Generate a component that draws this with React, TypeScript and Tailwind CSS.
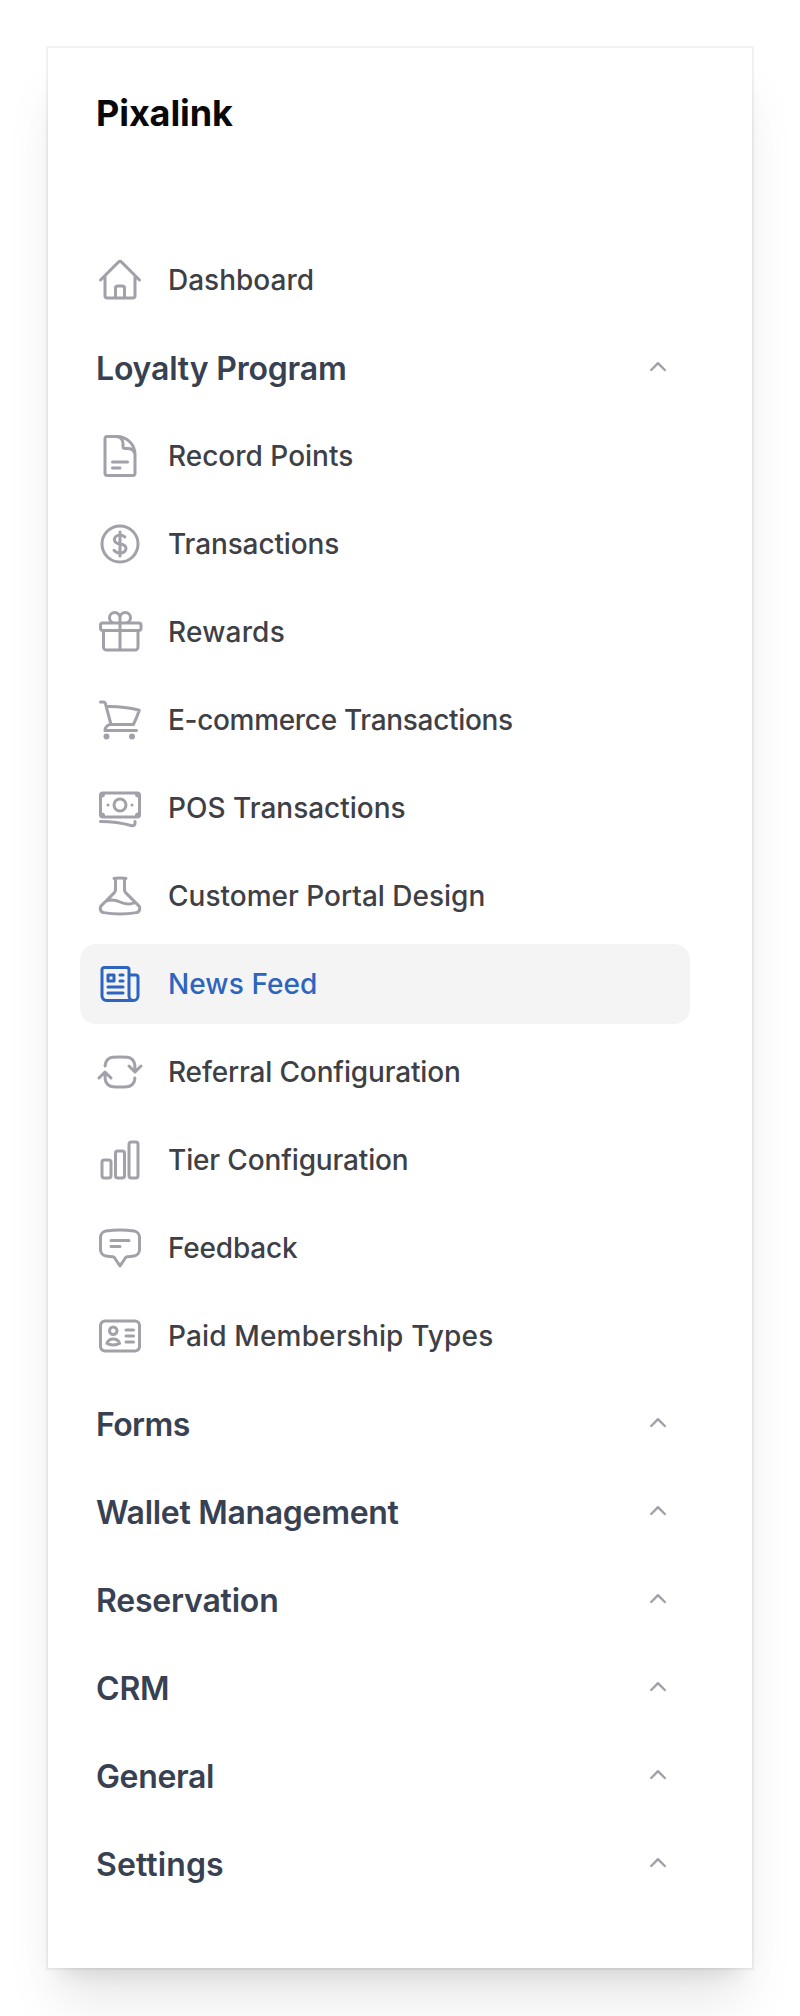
import type { ComponentType } from 'react';
import {
  HiMiniChevronUp,
  HiOutlineArrowPathRoundedSquare,
  HiOutlineBanknotes,
  HiOutlineBeaker,
  HiOutlineChartBar,
  HiOutlineChatBubbleBottomCenterText,
  HiOutlineCurrencyDollar,
  HiOutlineDocumentText,
  HiOutlineGift,
  HiOutlineHome,
  HiOutlineIdentification,
  HiOutlineNewspaper,
  HiOutlineShoppingCart,
} from 'react-icons/hi2';

interface NavItem {
  label: string;
  icon: ComponentType<{ className?: string }>;
  tracking?: string;
  active?: boolean;
}

interface NavGroup {
  label: string;
  tracking?: string;
  items?: NavItem[];
}

const GROUPS: NavGroup[] = [
  {
    label: 'Loyalty Program',
    tracking: 'tracking-[-0.18px]',
    items: [
      { label: 'Record Points', icon: HiOutlineDocumentText },
      { label: 'Transactions', icon: HiOutlineCurrencyDollar, tracking: 'tracking-[-0.12px]' },
      { label: 'Rewards', icon: HiOutlineGift, tracking: 'tracking-[0.2px]' },
      { label: 'E-commerce Transactions', icon: HiOutlineShoppingCart, tracking: 'tracking-[-0.32px]' },
      { label: 'POS Transactions', icon: HiOutlineBanknotes },
      { label: 'Customer Portal Design', icon: HiOutlineBeaker },
      { label: 'News Feed', icon: HiOutlineNewspaper, tracking: 'tracking-[0.1px]', active: true },
      { label: 'Referral Configuration', icon: HiOutlineArrowPathRoundedSquare, tracking: 'tracking-[-0.15px]' },
      { label: 'Tier Configuration', icon: HiOutlineChartBar, tracking: 'tracking-[-0.15px]' },
      { label: 'Feedback', icon: HiOutlineChatBubbleBottomCenterText, tracking: 'tracking-[-0.2px]' },
      { label: 'Paid Membership Types', icon: HiOutlineIdentification, tracking: 'tracking-[0.15px]' },
    ],
  },
  { label: 'Forms', tracking: 'tracking-[-0.6px]' },
  { label: 'Wallet Management', tracking: 'tracking-[-0.3px]' },
  { label: 'Reservation', tracking: 'tracking-[-0.2px]' },
  { label: 'CRM', tracking: 'tracking-[-0.2px]' },
  { label: 'General', tracking: 'tracking-[-0.35px]' },
  { label: 'Settings', tracking: 'tracking-[0.1px]' },
];

function SidebarItem({ label, icon: Icon, tracking = '', active = false }: NavItem) {
  return (
    <li>
      <a
        href="#"
        className={`flex h-20 items-center gap-6 rounded-2xl px-4 ${active ? 'bg-[#f4f4f4] text-[#2c64c0]' : 'text-[#3f3f46]'}`}
      >
        <Icon className={`size-12 shrink-0 ${active ? '' : 'text-[#a1a1aa]'}`} />
        <span className={`text-[28px] leading-10 font-medium ${tracking}`}>{label}</span>
      </a>
    </li>
  );
}

function SidebarGroup({ label, tracking = '', items = [] }: NavGroup) {
  return (
    <li className="flex flex-col gap-2">
      <button type="button" className="flex h-20 w-full items-center justify-between px-4">
        <span className={`pt-0.5 text-[32px] leading-10 font-semibold text-[#374151] ${tracking}`}>
          {label}
        </span>
        <HiMiniChevronUp className="size-8 text-[#a1a1aa]" />
      </button>
      {items.length > 0 && (
        <ul className="flex flex-col gap-2">
          {items.map((item) => (
            <SidebarItem key={item.label} {...item} />
          ))}
        </ul>
      )}
    </li>
  );
}

export default function App() {
  return (
    <div className="h-[2016px] w-[800px] overflow-hidden bg-white p-12 font-['Inter',sans-serif]">
      <aside className="flex h-[1920px] w-[704px] flex-col bg-white shadow-[0_0_0_2px_rgba(9,9,11,0.05),0_40px_50px_-10px_rgba(0,0,0,0.1),0_16px_20px_-12px_rgba(0,0,0,0.1)]">
        <header className="flex h-32 items-center px-12">
          <span className="pt-0.5 text-4xl leading-10 font-bold tracking-[-0.1px] text-[#09090b]">Pixalink</span>
        </header>

        <nav className="py-16 pr-[62px] pl-8">
          <ul className="flex flex-col gap-2">
            <SidebarItem label="Dashboard" icon={HiOutlineHome} />
            {GROUPS.map((group) => (
              <SidebarGroup key={group.label} {...group} />
            ))}
          </ul>
        </nav>
      </aside>
    </div>
  );
}
